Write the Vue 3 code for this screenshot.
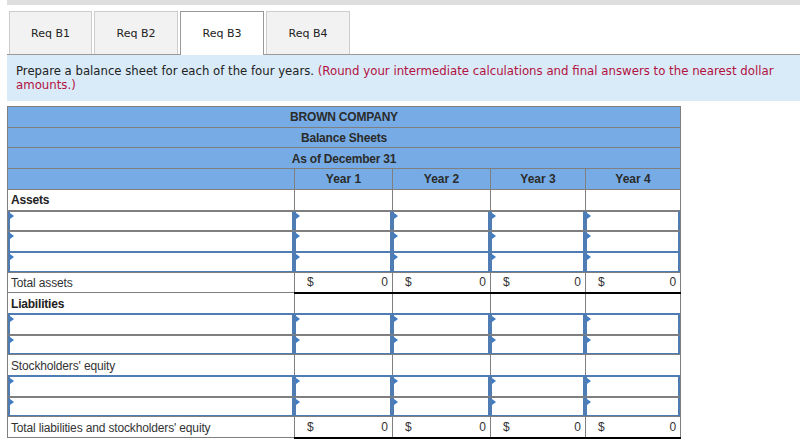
<template>
  <div class="page">
    <div class="topbar"></div>
    <div class="tabs">
      <div v-for="t in tabs" :key="t" class="tab" :class="{ active: t === 'Req B3' }">{{ t }}</div>
    </div>
    <div class="info">
      <div class="line">Prepare a balance sheet for each of the four years. <span class="note">(Round your intermediate calculations and final answers to the nearest dollar</span></div>
      <div class="line note">amounts.)</div>
    </div>
    <table class="sheet">
      <colgroup>
        <col class="c0" />
        <col class="c1" />
        <col class="c2" />
        <col class="c3" />
        <col class="c4" />
      </colgroup>
      <tbody>
        <tr v-for="title in titles" :key="title.text" class="head title-row" :style="{ height: title.h + 'px' }">
          <td colspan="5"><span class="title-text">{{ title.text }}</span></td>
        </tr>
        <tr class="head" style="height: 21px">
          <td></td>
          <td v-for="y in years" :key="y" class="year">{{ y }}</td>
        </tr>
        <template v-for="(row, i) in rows" :key="i">
          <tr
            v-if="row.type === 'input'"
            :class="{ 'top-blue': row.blue, 'last-input': row.last }"
            :style="{ height: row.h + 'px' }"
          >
            <td v-for="n in 5" :key="n" class="input-cell"><div class="input-box"></div></td>
          </tr>
          <tr v-else-if="row.type === 'total'" :style="{ height: row.h + 'px' }">
            <td class="label" :class="{ low: row.low }">{{ row.label }}</td>
            <td v-for="y in years" :key="y" class="total">
              <div class="money"><span>$</span><span>0</span></div>
            </td>
          </tr>
          <tr v-else :style="{ height: row.h + 'px' }">
            <td class="label" :class="{ bold: row.bold, low: row.low }">{{ row.label }}</td>
            <td v-for="y in years" :key="y"></td>
          </tr>
        </template>
      </tbody>
    </table>
  </div>
</template>

<script setup>
const tabs = ['Req B1', 'Req B2', 'Req B3', 'Req B4']
const years = ['Year 1', 'Year 2', 'Year 3', 'Year 4']
const titles = [
  { text: 'BROWN COMPANY', h: 21 },
  { text: 'Balance Sheets', h: 20 },
  { text: 'As of December 31', h: 21 }
]
const rows = [
  { type: 'text', label: 'Assets', bold: true, h: 21 },
  { type: 'input', h: 20 },
  { type: 'input', h: 21 },
  { type: 'input', blue: true, last: true, h: 21 },
  { type: 'total', label: 'Total assets', h: 20 },
  { type: 'text', label: 'Liabilities', bold: true, low: true, h: 21 },
  { type: 'input', blue: true, h: 21 },
  { type: 'input', last: true, h: 20 },
  { type: 'text', label: "Stockholders' equity", low: true, h: 21 },
  { type: 'input', blue: true, h: 21 },
  { type: 'input', last: true, h: 20 },
  { type: 'total', label: "Total liabilities and stockholders' equity", low: true, h: 21 }
]
</script>

<style>
html, body {
  margin: 0;
  background: #fff;
}
</style>

<style scoped>
.page {
  width: 793px;
  margin-left: 7px;
  font-family: "Liberation Sans", Arial, sans-serif;
  overflow: hidden;
  height: 439px;
}
.topbar {
  height: 5px;
  background: #dedede;
}
.tabs {
  display: flex;
  gap: 2px;
  padding: 6px 0 0 2px;
  border-bottom: 1px solid #999;
  height: 43px;
}
.tab {
  width: 84px;
  height: 43px;
  box-sizing: border-box;
  border: 1px solid #ccc;
  border-bottom: none;
  background: #f2f2f2;
  display: flex;
  align-items: center;
  justify-content: center;
  font-family: "DejaVu Sans", Verdana, sans-serif;
  font-size: 11px;
  color: #222;
}
.tab:first-child {
  width: 83px;
}
.tab.active {
  background: #fff;
  border-color: #999;
  height: 44px;
  position: relative;
  z-index: 1;
}
.info {
  background: #d9ebf9;
  height: 46px;
  box-sizing: border-box;
  padding: 9px 9px 0;
  font-family: "DejaVu Sans", Verdana, sans-serif;
  font-size: 11.7px;
  line-height: 14px;
  color: #222;
}
.line {
  white-space: nowrap;
}
.note {
  font-size: 11.75px;
  color: #b3123f;
}
.sheet {
  margin-top: 5px;
  width: 673px;
  table-layout: fixed;
  border-collapse: collapse;
  font-size: 12px;
  color: #333;
}
.c0 { width: 287px; }
.c1 { width: 98px; }
.c2 { width: 98px; }
.c3 { width: 95px; }
.c4 { width: 95px; }
td {
  border: 1px solid #7f7f7f;
  padding: 0;
  box-sizing: border-box;
}
.head td {
  background: #76abe5;
  font-weight: bold;
  color: #2b2b2b;
}
.title-row:nth-child(3) td {
  padding-top: 1px;
}
.title-text {
  display: block;
  width: 108px;
  margin-left: 282px;
  text-align: center;
  white-space: nowrap;
  letter-spacing: -0.2px;
}
.year {
  text-align: center;
}
.label {
  padding-left: 3px;
  color: #333;
  letter-spacing: -0.15px;
}
.low {
  padding-top: 2px;
}
.bold {
  font-weight: bold;
  color: #222;
  letter-spacing: -0.2px;
}
.input-cell {
  position: relative;
}
.input-box {
  position: absolute;
  inset: 0;
  border-style: solid;
  border-color: #7f7f7f #4f7db3 #4f7db3;
  border-width: 1px 2px 0;
}
.input-cell + .input-cell .input-box {
  left: -1px;
}
.top-blue .input-box {
  top: -1px;
  border-top: 2px solid #4f7db3;
}
.last-input .input-box {
  border-bottom-width: 1px;
}
.input-box::before {
  content: "";
  position: absolute;
  left: 0;
  top: 1px;
  border-left: 4px solid #3f7cc4;
  border-top: 3px solid transparent;
  border-bottom: 3px solid transparent;
}
.total {
  border-top: 1px solid #000;
  border-bottom: 2px solid #000;
}
.money {
  display: flex;
  justify-content: space-between;
  padding: 0 4px 0 12px;
}
</style>
